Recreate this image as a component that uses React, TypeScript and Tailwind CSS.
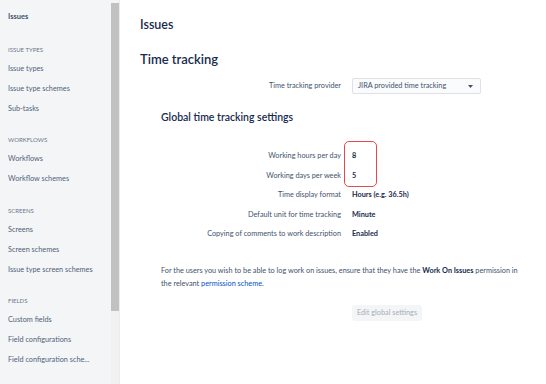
import React from 'react';

const sections = [
  { title: 'Issue types', items: ['Issue types', 'Issue type schemes', 'Sub-tasks'] },
  { title: 'Workflows', items: ['Workflows', 'Workflow schemes'] },
  { title: 'Screens', items: ['Screens', 'Screen schemes', 'Issue type screen schemes'] },
  { title: 'Fields', items: ['Custom fields', 'Field configurations', 'Field configuration sche...'] },
];

const rows = [
  { label: 'Working hours per day', value: '8' },
  { label: 'Working days per week', value: '5' },
  { label: 'Time display format', value: 'Hours (e.g. 36.5h)' },
  { label: 'Default unit for time tracking', value: 'Minute' },
  { label: 'Copying of comments to work description', value: 'Enabled' },
];

export default function App() {
  return (
    <div
      className="flex w-[546px] h-[384px] overflow-hidden bg-white text-[#172b4d]"
      style={{ fontFamily: 'Lato, "Open Sans", sans-serif' }}
    >
      {/* sidebar */}
      <div className="flex w-[120px] shrink-0 bg-[#f4f5f7] border-r border-[#ebecf0]">
        <div className="w-[111px] pl-[8px] pt-[7px]">
          <div className="flex h-[20px] items-center text-[7.5px] font-bold text-[#42526e]">Issues</div>
          {sections.map((s, i) => (
            <div key={s.title} className={i === 0 ? 'mt-[12px]' : 'mt-[10.5px]'}>
              <div className="flex h-[20px] items-center text-[6px] uppercase text-[#6b778c]">{s.title}</div>
              {s.items.map((it) => (
                <div key={it} className="flex h-[20px] items-center whitespace-nowrap text-[7.3px] text-[#505f79]">
                  {it}
                </div>
              ))}
            </div>
          ))}
        </div>
        <div className="flex w-[8px] flex-col">
          <div className="mt-[3px] h-[308px] bg-[#c1c1c1]" />
          <div className="flex-1 bg-[#f1f1f1]" />
        </div>
      </div>

      {/* main */}
      <div className="flex-1 pl-[20px] pt-[15px]">
        <h1 className="flex h-[20px] items-center text-[12.5px] font-semibold">Issues</h1>
        <h2 className="mt-[15px] flex h-[20px] items-center text-[13px] font-semibold">Time tracking</h2>

        <div className="mt-[8px] flex items-center gap-[11px]">
          <div className="w-[201px] text-right text-[7.3px] text-[#42526e]">Time tracking provider</div>
          <div className="flex h-[16px] w-[129px] items-center justify-between rounded-[2px] border border-[#dfe1e6] bg-[#fafbfc] pl-[5px] pr-[7px] text-[7.3px] text-[#42526e]">
            <span>JIRA provided time tracking</span>
            <svg width="5" height="3" viewBox="0 0 5 3">
              <path d="M0 0h5L2.5 3z" fill="#42526e" />
            </svg>
          </div>
        </div>

        <h3 className="mt-[16px] flex h-[16px] items-center pl-[21px] text-[10.5px] font-semibold">
          Global time tracking settings
        </h3>

        <div className="relative mt-[21px] flex flex-col">
          {rows.map((r) => (
            <div key={r.label} className="flex h-[19.5px] items-center gap-[11px]">
              <div className="w-[201px] text-right text-[7.3px] text-[#42526e]">{r.label}</div>
              <div className="text-[7.3px] font-bold text-[#172b4d]">{r.value}</div>
            </div>
          ))}
          <div className="absolute left-[204px] top-[-6px] h-[46px] w-[33px] rounded-[5px] border-[1.5px] border-[#e5484d]" />
        </div>

        <div className="mt-[19px] pl-[21px] text-[7.3px] leading-[13px] text-[#42526e]">
          <div className="whitespace-nowrap">
            For the users you wish to be able to log work on issues, ensure that they have the{' '}
            <b className="text-[#172b4d]">Work On Issues</b> permission in
          </div>
          <div className="whitespace-nowrap">
            the relevant <span className="text-[#0052cc]">permission scheme</span>.
          </div>
        </div>

        <div className="mt-[7px] pl-[212px]">
          <button className="h-[16px] w-[70px] rounded-[3px] bg-[#f4f5f7] text-[7.3px] text-[#a5adba]">
            Edit global settings
          </button>
        </div>
      </div>
    </div>
  );
}
